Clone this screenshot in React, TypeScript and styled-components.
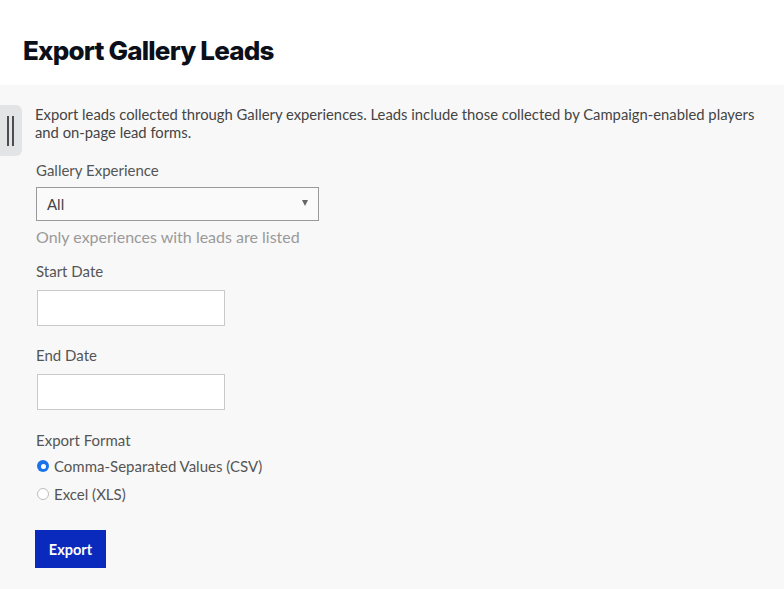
import React from "react";
import styled, { createGlobalStyle } from "styled-components";

const Global = createGlobalStyle`
  html, body { margin: 0; padding: 0; background: #f8f8f8; }
  body { font-family: Lato, "Liberation Sans", sans-serif; }
  * { box-sizing: border-box; }
`;

const Page = styled.div`
  width: 784px;
  min-height: 589px;
  display: flex;
  flex-direction: column;
  background: #f8f8f8;
`;

const Header = styled.header`
  height: 85px;
  background: #ffffff;
  display: flex;
  align-items: center;
  padding: 16px 0 0 23px;
`;

const Title = styled.h1`
  margin: 0;
  font-family: Inter, "Liberation Sans", sans-serif;
  font-weight: 800;
  font-size: 26px;
  letter-spacing: -0.8px;
  color: #0b0f1a;
`;

const Panel = styled.main`
  position: relative;
  flex: 1;
  padding: 20px 20px 20px 35px;
  display: flex;
  flex-direction: column;
`;

const Handle = styled.div`
  position: absolute;
  left: 0;
  top: 20px;
  width: 22px;
  height: 51px;
  background: #e3e4e5;
  border-radius: 0 6px 6px 0;
  display: flex;
  justify-content: center;
  align-items: center;
  gap: 3px;
  padding-right: 2px;
`;

const HandleBar = styled.span`
  width: 2px;
  height: 30px;
  background: #4a4d52;
`;

const Intro = styled.p`
  margin: 0;
  font-size: 14.8px;
  line-height: 18px;
  color: #444;
  max-width: 740px;
`;

const Field = styled.div<{ $mt: number }>`
  margin-top: ${(p) => p.$mt}px;
  display: flex;
  flex-direction: column;
  align-items: flex-start;
`;

const Label = styled.label`
  font-size: 15px;
  line-height: 18px;
  color: #555;
  padding-left: 1px;
`;

const Select = styled.div`
  margin-top: 8px;
  margin-left: 1px;
  width: 283px;
  height: 34px;
  border: 1px solid #9a9a9a;
  background: #fafafa;
  display: flex;
  align-items: center;
  justify-content: space-between;
  padding: 0 10px 0 10px;
  font-size: 15px;
  color: #444;
`;

const Caret = styled.span`
  width: 0;
  height: 0;
  border-left: 3.5px solid transparent;
  border-right: 3.5px solid transparent;
  border-top: 6px solid #666;
  margin-top: -2px;
`;

const Help = styled.div`
  margin-top: 7px;
  padding-left: 1px;
  font-size: 16px;
  line-height: 18px;
  color: #9a9a9a;
`;

const Input = styled.input`
  margin: 10px 0 0 2px;
  width: 188px;
  height: 36px;
  border: 1px solid #c9c9c9;
  background: #fff;
  outline: none;
`;

const RadioRow = styled.label<{ $mt: number }>`
  margin-top: ${(p) => p.$mt}px;
  display: flex;
  align-items: center;
  gap: 5px;
  font-size: 15px;
  line-height: 18px;
  color: #555;
`;

const RadioDot = styled.span<{ $on: boolean }>`
  margin-left: 2px;
  width: 12px;
  height: 12px;
  border-radius: 50%;
  background: ${(p) => (p.$on ? "#1a73e8" : "#fff")};
  border: ${(p) => (p.$on ? "none" : "1px solid #bdbdbd")};
  display: flex;
  align-items: center;
  justify-content: center;
  &::after {
    content: "";
    display: ${(p) => (p.$on ? "block" : "none")};
    width: 5px;
    height: 5px;
    border-radius: 50%;
    background: #fff;
  }
`;

const Button = styled.button`
  margin-top: 27px;
  align-self: flex-start;
  width: 71px;
  height: 38px;
  border: none;
  background: #0a29bd;
  color: #fff;
  font-family: Lato, "Liberation Sans", sans-serif;
  font-weight: 700;
  font-size: 14.5px;
  cursor: pointer;
`;

export default function App() {
  return (
    <Page>
      <Global />
      <Header>
        <Title>Export Gallery Leads</Title>
      </Header>
      <Panel>
        <Handle>
          <HandleBar />
          <HandleBar />
        </Handle>
        <Intro>
          Export leads collected through Gallery experiences. Leads include those collected by Campaign-enabled players
          and on-page lead forms.
        </Intro>
        <Field $mt={20}>
          <Label>Gallery Experience</Label>
          <Select>
            <span>All</span>
            <Caret />
          </Select>
          <Help>Only experiences with leads are listed</Help>
        </Field>
        <Field $mt={16}>
          <Label>Start Date</Label>
          <Input />
        </Field>
        <Field $mt={20}>
          <Label>End Date</Label>
          <Input />
        </Field>
        <Field $mt={21}>
          <Label>Export Format</Label>
          <RadioRow $mt={8}>
            <RadioDot $on />
            Comma-Separated Values (CSV)
          </RadioRow>
          <RadioRow $mt={10}>
            <RadioDot $on={false} />
            Excel (XLS)
          </RadioRow>
        </Field>
        <Button>Export</Button>
      </Panel>
    </Page>
  );
}
